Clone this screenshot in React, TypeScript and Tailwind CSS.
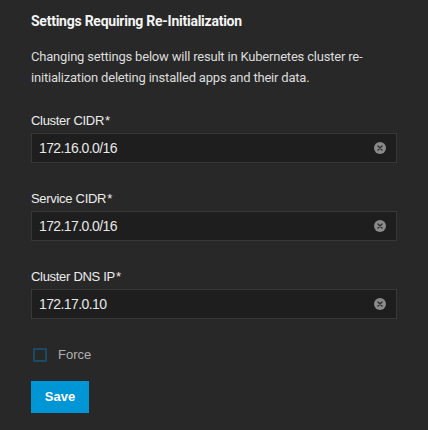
import React from 'react';

type FieldProps = { label: string; value: string };

function ClearIcon() {
  return (
    <svg width="12" height="12" viewBox="0 0 12 12" aria-hidden="true">
      <circle cx="6" cy="6" r="6" fill="#8a8a8a" />
      <path d="M4 4 L8 8 M8 4 L4 8" stroke="#2a2a2a" strokeWidth="1.3" strokeLinecap="round" />
    </svg>
  );
}

function Field({ label, value }: FieldProps) {
  return (
    <div className="flex flex-col">
      <label className="mb-[4px] text-[13px] leading-[16px] tracking-[-0.3px] text-[#ececec] font-['Liberation_Sans',sans-serif]">
        {label}
        <span className="ml-[1px]">*</span>
      </label>
      <div className="flex h-[30px] items-center justify-between border border-[#383838] bg-[#1e1e1e] pl-[7px] pr-[10px]">
        <span className="text-[14px] tracking-[-0.6px] text-[#e8e8e8] font-['Liberation_Sans',sans-serif]">{value}</span>
        <ClearIcon />
      </div>
    </div>
  );
}

export default function App() {
  return (
    <div className="h-[430px] w-[428px] bg-[#282828] px-[31px] pt-[13px] font-['Roboto',sans-serif]">
      <h3 className="text-[14px] font-bold leading-[16px] tracking-[-0.25px] text-[#f4f4f4]">
        Settings Requiring Re-Initialization
      </h3>
      <p className="mt-[17px] w-[367px] text-[13px] leading-[21px] tracking-[-0.2px] text-[#dcdcdc]">
        Changing settings below will result in Kubernetes cluster re-initialization deleting installed apps and their data.
      </p>
      <div className="mt-[25px] flex flex-col gap-[28px]">
        <Field label="Cluster CIDR" value="172.16.0.0/16" />
        <Field label="Service CIDR" value="172.17.0.0/16" />
        <Field label="Cluster DNS IP" value="172.17.0.10" />
      </div>
      <div className="mt-[29px] flex h-[14px] items-center gap-[11px] pl-[2px]">
        <span className="h-[14px] w-[14px] rounded-[1px] border-2 border-[#1b4a66]" />
        <span className="text-[13px] leading-[14px] text-[#b0b0b0] font-['Liberation_Sans',sans-serif]">Force</span>
      </div>
      <button className="mt-[19px] h-[32px] w-[58px] bg-[#0095d5] text-[13px] font-bold text-white font-['Liberation_Sans',sans-serif]">
        Save
      </button>
    </div>
  );
}
